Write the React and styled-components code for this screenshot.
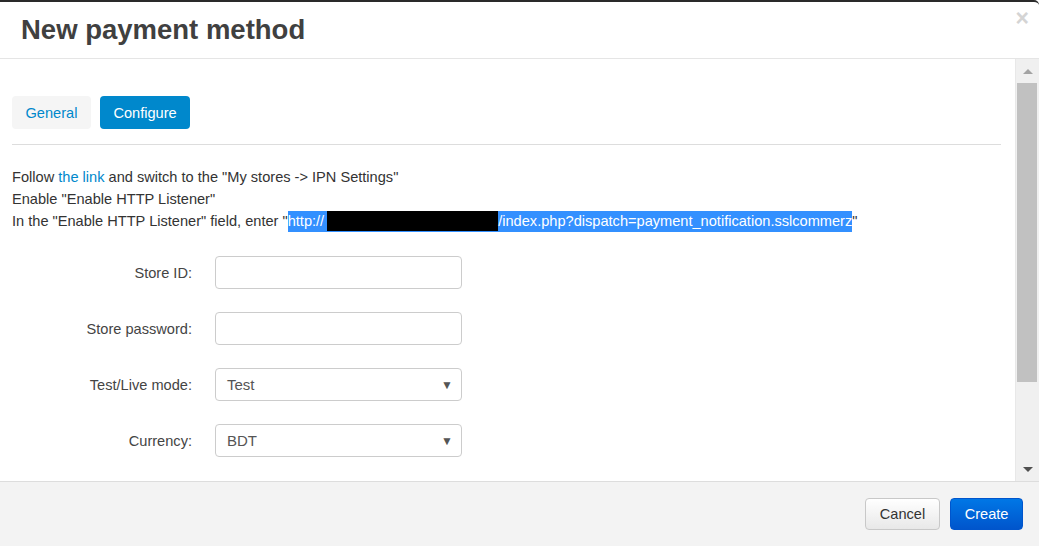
import React from 'react';
import styled, {createGlobalStyle} from 'styled-components';

const GlobalStyle = createGlobalStyle`
    html, body {
        margin: 0;
        padding: 0;
        background: #ffffff;
    }
    body {
        font-family: "Liberation Sans", Arial, sans-serif;
        font-size: 14.6px;
        color: #333;
    }
`;

const fields = [
    {label: 'Store ID:', type: 'input'},
    {label: 'Store password:', type: 'input'},
    {label: 'Test/Live mode:', type: 'select', value: 'Test'},
    {label: 'Currency:', type: 'select', value: 'BDT'},
];

const App = () => {
    return (
        <>
            <GlobalStyle />
            <Modal>
                <Header>
                    <Title>New payment method</Title>
                    <Close>×</Close>
                </Header>
                <Body>
                    <Content>
                        <Tabs>
                            <Tab>General</Tab>
                            <Tab active>Configure</Tab>
                        </Tabs>
                        <Divider />
                        <Notes>
                            <div>Follow <Link>the link</Link> and switch to the "My stores -&gt; IPN Settings"</div>
                            <div>Enable "Enable HTTP Listener"</div>
                            <div>
                                In the "Enable HTTP Listener" field, enter "
                                <Selected>http://<Redacted />/index.php?dispatch=payment_notification.sslcommerz</Selected>"
                            </div>
                        </Notes>
                        <Form>
                            {fields.map(f => (
                                <Row key={f.label}>
                                    <Label>{f.label}</Label>
                                    {f.type === 'input' ? (
                                        <Input />
                                    ) : (
                                        <Select>
                                            <span>{f.value}</span>
                                            <Caret>▼</Caret>
                                        </Select>
                                    )}
                                </Row>
                            ))}
                        </Form>
                    </Content>
                    <Scrollbar>
                        <ArrowUp />
                        <Thumb />
                        <Track />
                        <ArrowDown />
                    </Scrollbar>
                </Body>
                <Footer>
                    <CancelButton>Cancel</CancelButton>
                    <CreateButton>Create</CreateButton>
                </Footer>
            </Modal>
        </>
    );
};

export default App;

const Modal = styled.div`
    width: 1039px;
    height: 546px;
    display: flex;
    flex-direction: column;
    box-sizing: border-box;
    border-top: 2px solid #2a2a2a;
    border-top-right-radius: 5px;
    background: #fff;
    overflow: hidden;
`;

const Header = styled.div`
    height: 56px;
    flex: none;
    display: flex;
    align-items: center;
    justify-content: space-between;
    padding: 0 10px 0 21px;
    border-bottom: 1px solid #e5e5e5;
`;

const Title = styled.h3`
    margin: 0;
    font-size: 27.5px;
    font-weight: bold;
    color: #404040;
`;

const Close = styled.span`
    align-self: flex-start;
    margin-top: 5px;
    font-size: 23px;
    font-weight: bold;
    color: #d4d4d4;
    line-height: 1;
`;

const Body = styled.div`
    height: 422px;
    flex: none;
    display: flex;
    background: #fff;
`;

const Content = styled.div`
    flex: 1;
    padding: 37px 14px 0 12px;
    overflow: hidden;
`;

const Tabs = styled.div`
    display: flex;
    gap: 9px;
`;

const Tab = styled.div`
    height: 33px;
    padding: 0 13.5px;
    display: flex;
    align-items: center;
    border-radius: 4px;
    font-size: 14.6px;
    background: ${p => (p.active ? '#0088cc' : '#f5f5f5')};
    color: ${p => (p.active ? '#fff' : '#0088cc')};
`;

const Divider = styled.div`
    height: 1px;
    background: #dddddd;
    margin: 15px 0 21px;
`;

const Notes = styled.div`
    font-size: 14.6px;
    line-height: 22px;
    color: #333;
`;

const Link = styled.span`
    color: #0088cc;
`;

const Selected = styled.span`
    background: #3390ff;
    color: #fff;
    padding: 2px 0 3px;
`;

const Redacted = styled.span`
    display: inline-block;
    width: 171px;
    height: 20px;
    margin-left: 3px;
    background: #000;
    vertical-align: -5px;
`;

const Form = styled.div`
    margin-top: 24px;
    display: flex;
    flex-direction: column;
    gap: 23px;
`;

const Row = styled.div`
    display: grid;
    grid-template-columns: 180px 247px;
    column-gap: 23px;
    align-items: center;
`;

const Label = styled.div`
    text-align: right;
    font-size: 14.6px;
    color: #444;
`;

const Input = styled.div`
    height: 33px;
    box-sizing: border-box;
    border: 1px solid #cccccc;
    border-radius: 4px;
    background: #fff;
`;

const Select = styled(Input)`
    display: flex;
    align-items: center;
    justify-content: space-between;
    padding: 0 8px 0 11px;
    font-size: 15px;
    color: #555;
`;

const Caret = styled.span`
    font-size: 12px;
    color: #555;
`;

const Scrollbar = styled.div`
    width: 23px;
    flex: none;
    display: flex;
    flex-direction: column;
    background: #f0f0f0;
    border-left: 1px solid #e8e8e8;
`;

const ArrowUp = styled.div`
    height: 24px;
    flex: none;
    display: flex;
    align-items: center;
    justify-content: center;
    &::after {
        content: '';
        border-left: 5px solid transparent;
        border-right: 5px solid transparent;
        border-bottom: 5px solid #a3a3a3;
    }
`;

const Thumb = styled.div`
    height: 299px;
    margin: 0 2px 0 1px;
    background: #c1c1c1;
`;

const Track = styled.div`
    flex: 1;
`;

const ArrowDown = styled(ArrowUp)`
    &::after {
        border-bottom: none;
        border-top: 5px solid #505050;
    }
`;

const Footer = styled.div`
    flex: 1;
    display: flex;
    justify-content: flex-end;
    align-items: flex-start;
    gap: 10px;
    padding: 16px 16px 0 0;
    background: #f3f3f3;
    border-top: 1px solid #dddddd;
`;

const CancelButton = styled.div`
    height: 32px;
    box-sizing: border-box;
    padding: 0 14px;
    display: flex;
    align-items: center;
    border: 1px solid #c8c8c8;
    border-radius: 4px;
    background: linear-gradient(#ffffff, #e8e8e8);
    font-size: 14.6px;
    color: #333;
`;

const CreateButton = styled.div`
    height: 32px;
    box-sizing: border-box;
    padding: 0 13.5px;
    display: flex;
    align-items: center;
    border: 1px solid #0055cc;
    border-radius: 4px;
    background: linear-gradient(#0077e6, #0055cc);
    font-size: 14.6px;
    color: #fff;
`;
